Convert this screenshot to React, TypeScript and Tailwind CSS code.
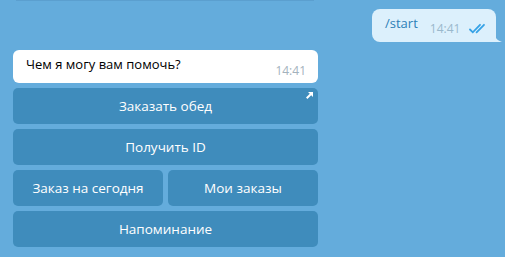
import React from 'react';

const font = { fontFamily: '"Open Sans", "Noto Sans", sans-serif' };

function Checks() {
  return (
    <svg width="19" height="11" viewBox="0 0 19 11" fill="none" stroke="#35a2e6" strokeWidth="1.8" strokeLinecap="round">
      <path d="M1 6.5 L3.8 9.3 L11 1.8" />
      <path d="M7.6 9.3 L15 1.8" />
    </svg>
  );
}

function Btn({ label, corner }: { label: string; corner?: boolean }) {
  return (
    <div className="relative flex-1 h-[36px] rounded-[5px] bg-[#3f8cbc] flex items-center justify-center text-[13.5px] font-medium text-white">
      {label}
      {corner && (
        <svg className="absolute right-[5px] top-[4px]" width="7" height="7" viewBox="0 0 7 7" fill="white">
          <path d="M2 0 H7 V5 L5.2 3.2 L1.4 7 L0 5.6 L3.8 1.8 Z" />
        </svg>
      )}
    </div>
  );
}

export default function App() {
  return (
    <div className="w-[505px] h-[257px] bg-[#64acdc] overflow-hidden" style={font}>
      <div className="ml-[16px] w-[298px] h-[1px] bg-[#5b9fcf]" />

      <div className="flex justify-end pr-[9px] mt-[8px]">
        <div className="relative w-[124px] h-[33px] bg-[#dcf0fc] rounded-[8px] rounded-br-none flex items-center pl-[13px]">
          <span className="text-[13px] text-[#2d7fb7] -mt-[4px]">/start</span>
          <span className="text-[12px] text-[#9ab8cc] ml-[12px] mt-[7px]">14:41</span>
          <span className="ml-[9px] mt-[6px]"><Checks /></span>
          <svg className="absolute -right-[6px] bottom-0" width="7" height="8" viewBox="0 0 7 8">
            <path d="M0 0 C0 4 2 6 7 8 H0 Z" fill="#dcf0fc" />
          </svg>
        </div>
      </div>

      <div className="ml-[13px] w-[305px] mt-[8px]">
        <div className="h-[33px] bg-white rounded-[6px] flex items-center justify-between pl-[13px] pr-[12px]">
          <span className="text-[13px] text-black -mt-[3px]">Чем я могу вам помочь?</span>
          <span className="text-[12px] text-[#a3b2bd] mt-[9px]">14:41</span>
        </div>
        <div className="flex flex-col gap-[5px] mt-[5px]">
          <div className="flex"><Btn label="Заказать обед" corner /></div>
          <div className="flex"><Btn label="Получить ID" /></div>
          <div className="flex gap-[5px]">
            <Btn label="Заказ на сегодня" />
            <Btn label="Мои заказы" />
          </div>
          <div className="flex"><Btn label="Напоминание" /></div>
        </div>
      </div>
    </div>
  );
}
